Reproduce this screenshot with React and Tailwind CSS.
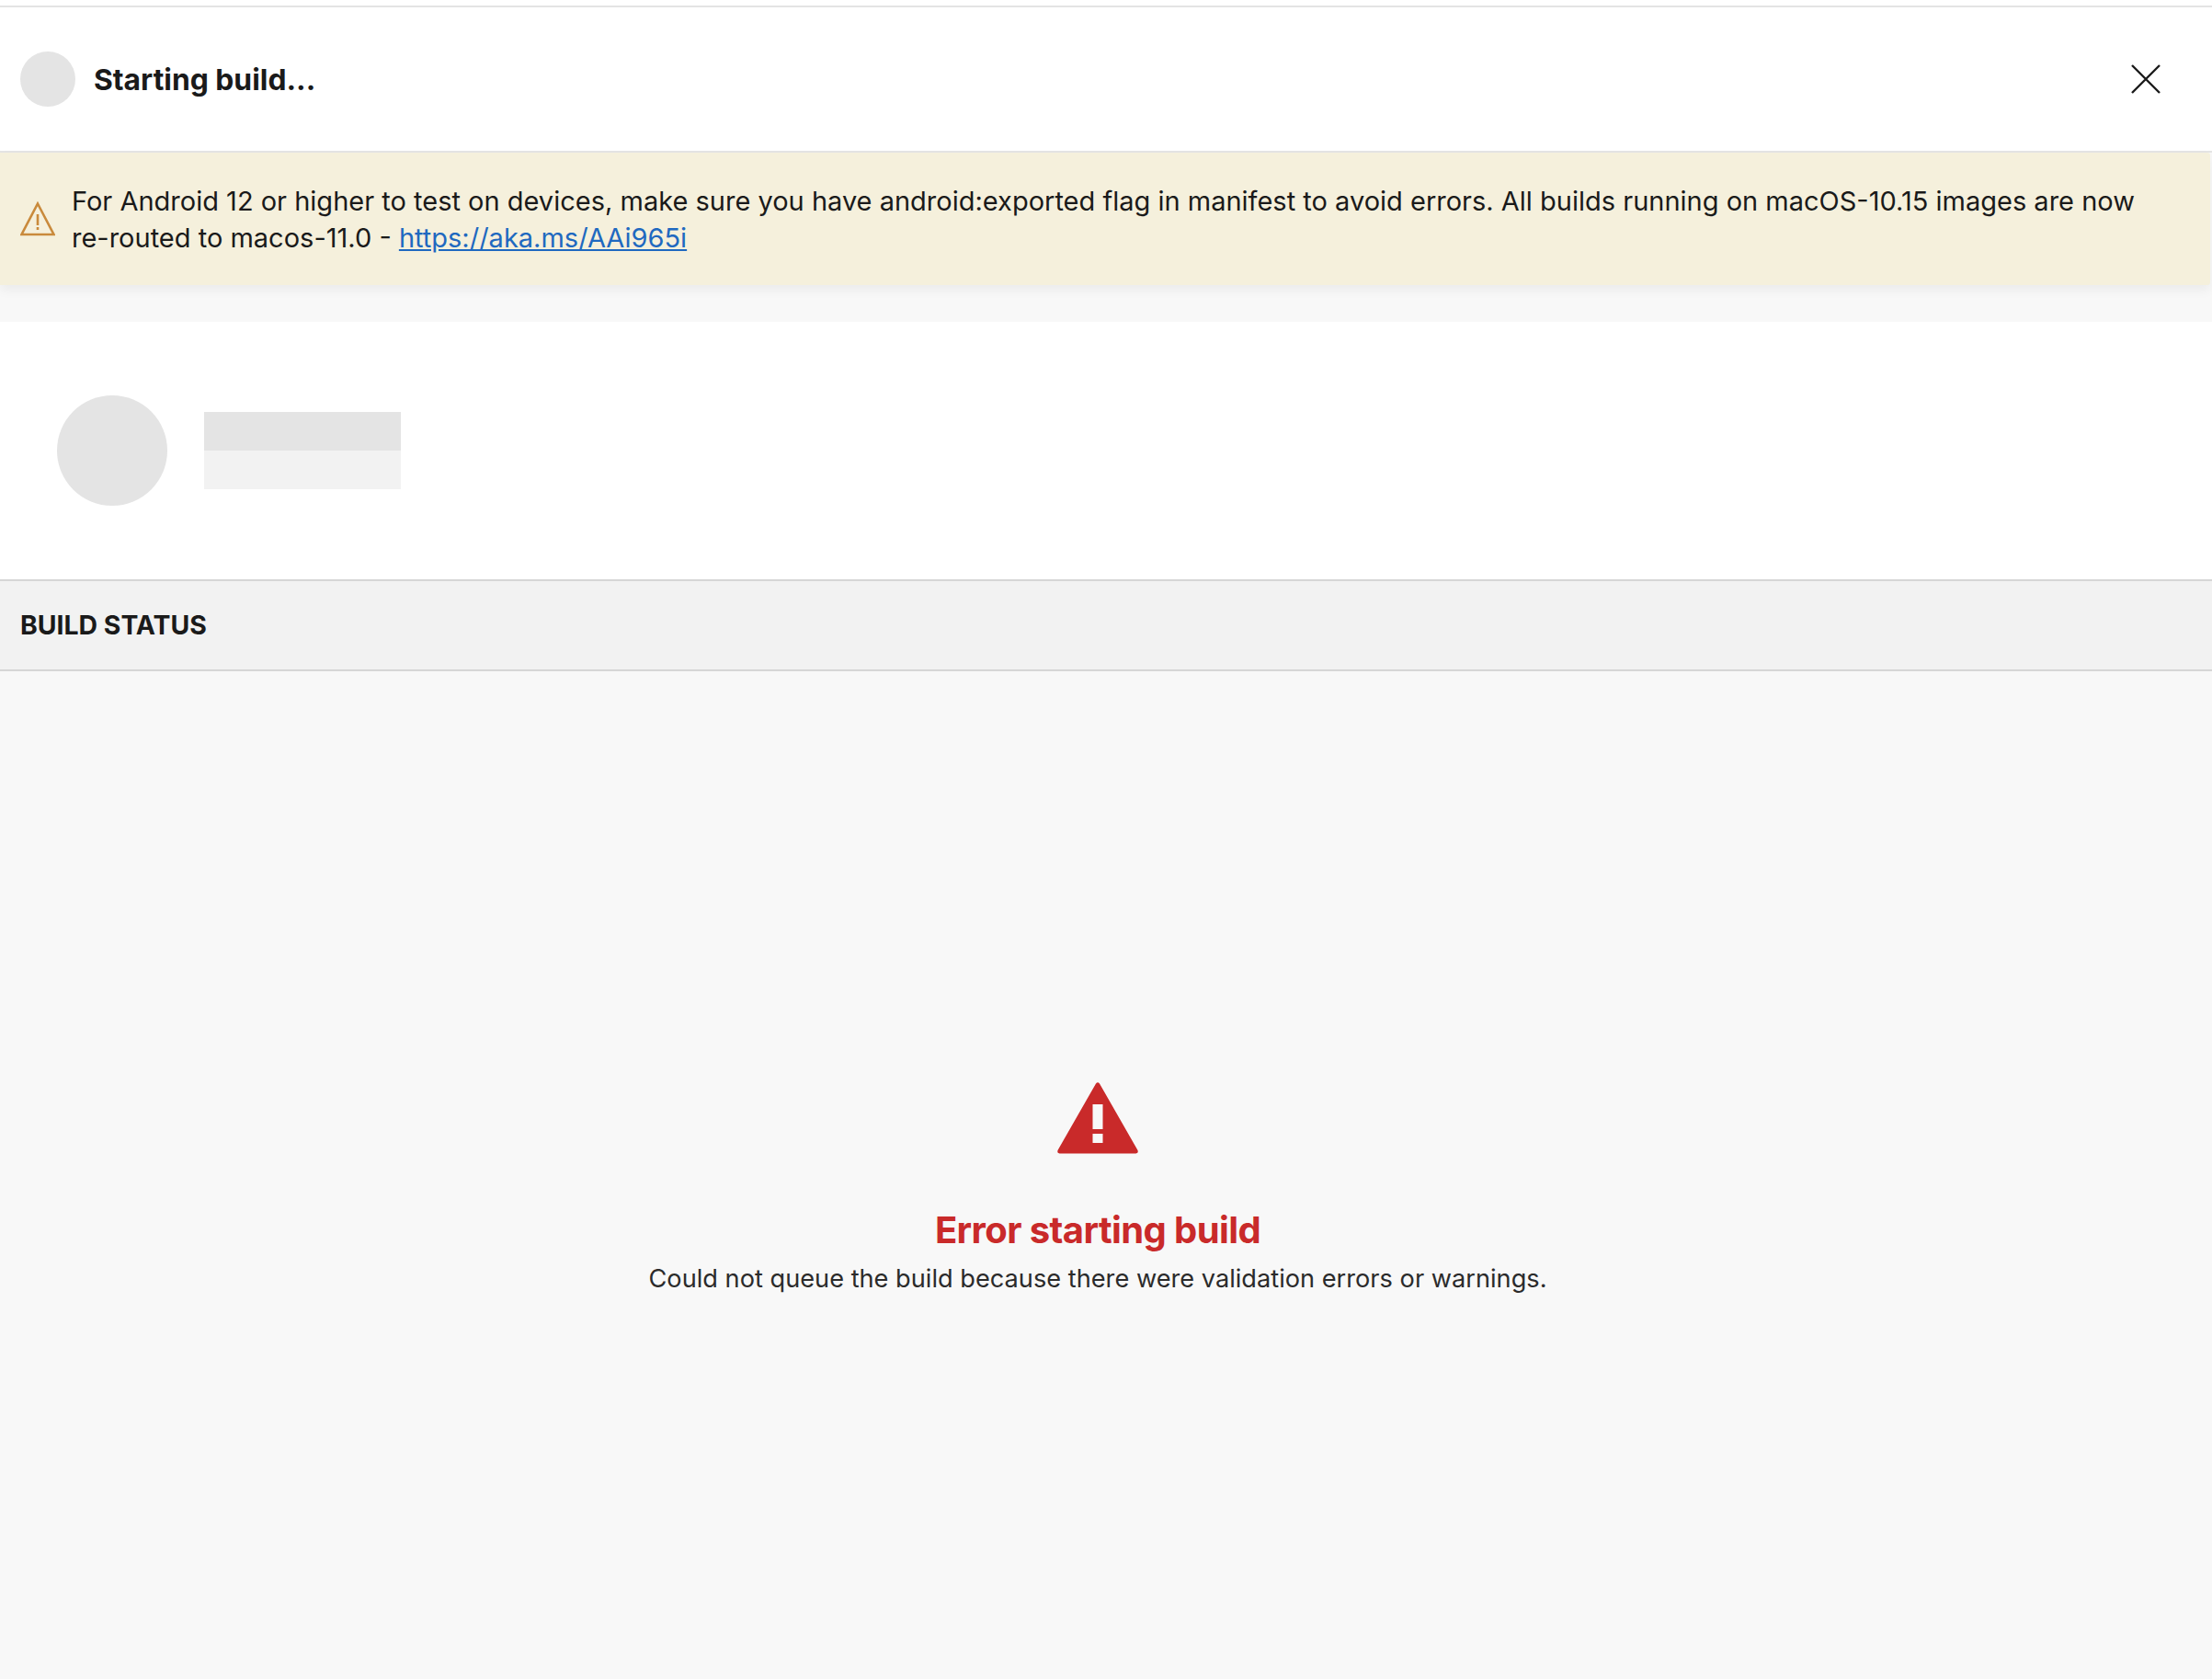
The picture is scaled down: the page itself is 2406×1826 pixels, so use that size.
export default function App() {
  return (
    <div className="min-h-[1826px] flex flex-col bg-[#f8f8f8] text-[#1a1a1a] font-['Inter',sans-serif]">
      <div className="h-[6px] bg-white" />

      {/* Header */}
      <div className="h-[160px] flex items-center justify-between pl-[22px] pr-[56px] bg-white border-t-2 border-b-2 border-[#e4e4e4]">
        <div className="flex items-center gap-[20px]">
          <div className="w-[60px] h-[60px] rounded-full bg-[#e4e4e4]" />
          <span className="text-[31.8px] font-bold pt-[1px]">Starting build...</span>
        </div>
        <svg width="32" height="32" viewBox="0 0 32 32" fill="none" stroke="#1a1a1a" strokeWidth="2.4">
          <path d="M1 1 L31 31 M31 1 L1 31" />
        </svg>
      </div>

      {/* Warning banner */}
      <div className="h-[144px] mr-[2px] rounded-r-[3px] flex items-center gap-[18px] pl-[22px] pr-[78px] bg-[#f5f0dc] shadow-[0_6px_12px_rgba(0,0,0,0.05)]">
        <svg className="shrink-0" width="38" height="38" viewBox="0 0 38 38" fill="none" stroke="#c98a3c" strokeWidth="2.6">
          <path d="M19 2.5 L36.5 36 H1.5 Z" />
          <path d="M19 14 V26 M19 28 V31" />
        </svg>
        <p className="text-[29px] leading-[40px] pt-[1px]">
          For Android 12 or higher to test on devices, make sure you have android:exported flag in manifest to avoid errors. All builds running on macOS-10.15 images are now re-routed to macos-11.0 -{' '}
          <a href="#" className="text-[#1f69c0] underline">https://aka.ms/AAi965i</a>
        </p>
      </div>

      <div className="h-[40px]" />

      {/* Skeleton */}
      <div className="h-[280px] flex items-center gap-[40px] pl-[62px] bg-white">
        <div className="w-[120px] h-[120px] rounded-full bg-[#e4e4e4]" />
        <div className="w-[214px] flex flex-col">
          <div className="h-[42px] bg-[#e4e4e4]" />
          <div className="h-[42px] bg-[#f2f2f2]" />
        </div>
      </div>

      {/* Section title */}
      <div className="h-[100px] flex items-center pl-[22px] bg-[#f2f2f2] border-t-2 border-b-2 border-[#d6d6d6]">
        <span className="text-[28.4px] font-bold">BUILD STATUS</span>
      </div>

      {/* Error state */}
      <div className="flex flex-col items-center pt-[446px] pr-[18px]">
        <svg width="90" height="80" viewBox="0 0 90 80" fill="#c92a2a">
          <path fillRule="evenodd" d="M43 2.5 Q45 0 47 2.5 L88.5 75 Q89.5 78 86.5 78.5 H3.5 Q0.5 78 1.5 75 Z M39.5 25 V52 H50.5 V25 Z M39.5 57 V67 H50.5 V57 Z" />
        </svg>
        <h2 className="mt-[58px] text-[40px] leading-[48px] font-bold text-[#c92a2a] tracking-[-0.6px]">Error starting build</h2>
        <p className="mt-[9px] text-[27.2px] leading-[40px] text-[#2b2b2b]">Could not queue the build because there were validation errors or warnings.</p>
      </div>
    </div>
  );
}
